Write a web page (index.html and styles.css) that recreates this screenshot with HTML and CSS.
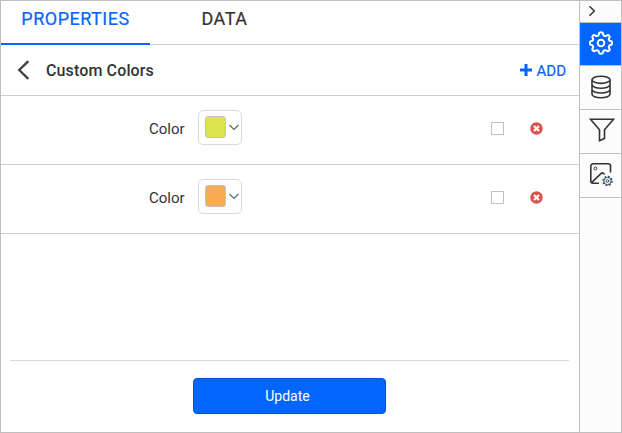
FILE: index.html
```html
<!DOCTYPE html>
<html lang="en">
<head>
<meta charset="utf-8">
<title>Properties</title>
<link rel="stylesheet" href="styles.css">
</head>
<body>
<div class="window">
  <main class="panel">
    <nav class="tabs">
      <div class="tab active"><span>PROPERTIES</span></div>
      <div class="tab"><span>DATA</span></div>
    </nav>
    <header class="header">
      <svg class="back" width="14" height="20" viewBox="0 0 14 20"><path d="M12.300 1.200 3.300 10l9 8.800"/></svg>
      <h1 class="title">Custom Colors</h1>
      <div class="add">
        <svg width="12" height="12" viewBox="0 0 12 12"><path d="M6 0v12M0 6h12"/></svg>
        <span>ADD</span>
      </div>
    </header>
    <section class="row">
      <span class="label">Color</span>
      <div class="picker">
        <i class="swatch lime"></i>
        <svg class="caret" width="12" height="7" viewBox="0 0 12 7"><path d="m1.500 1 4.500 4.500L10.500 1"/></svg>
      </div>
      <i class="check"></i>
      <svg class="remove" width="13" height="13" viewBox="0 0 13 13"><circle cx="6.500" cy="6.500" r="6.200"/><path d="m4 4 5 5m0-5L4 9"/></svg>
    </section>
    <section class="row">
      <span class="label">Color</span>
      <div class="picker">
        <i class="swatch orange"></i>
        <svg class="caret blue" width="12" height="7" viewBox="0 0 12 7"><path d="m1.500 1 4.500 4.500L10.500 1"/></svg>
      </div>
      <i class="check"></i>
      <svg class="remove" width="13" height="13" viewBox="0 0 13 13"><circle cx="6.500" cy="6.500" r="6.200"/><path d="m4 4 5 5m0-5L4 9"/></svg>
    </section>
    <footer class="footer"><button class="update">Update</button></footer>
  </main>
  <aside class="rail">
    <div class="collapse"><svg width="8" height="12" viewBox="0 0 8 12"><path d="m1.500 1.200 4.800 4.800-4.800 4.800"/></svg></div>
    <div class="tool selected">
      <svg width="24" height="24" viewBox="0 0 24 24"><path d="M10 3q0-1.800 2-1.800T14 3q.3 1.600 1.500 2t2.400-.6q1.200-.8 2.200.2t.2 2.200q-.8 1.200-.3 2.200t1.500 1q1.700.2 1.700 2t-1.700 2q-1 .2-1.500 1.200t.3 2.200q.8 1.200-.2 2.200t-2.200.2q-1.200-.9-2.400-.5t-1.500 2q-.2 1.500-2 1.500t-2-1.500q-.3-1.600-1.500-2t-2.400.5q-1.200.8-2.200-.2t-.2-2.200q.8-1.200.3-2.200T2.500 14Q.8 13.800.8 12t1.700-2Q3.600 9.900 4 9t-.3-2.200q-.8-1.200.2-2.200t2.200-.2Q7.300 5.400 8.500 5T10 3z"/><circle cx="12" cy="12" r="3.300"/></svg>
    </div>
    <div class="tool">
      <svg width="22" height="24" viewBox="0 0 22 24"><ellipse cx="11" cy="4.800" rx="9" ry="3.600"/><path d="M2 4.800v14.400c0 2 4 3.600 9 3.600s9-1.600 9-3.600V4.800M2 9.600c0 2 4 3.600 9 3.600s9-1.600 9-3.600M2 14.400c0 2 4 3.600 9 3.600s9-1.600 9-3.600"/></svg>
    </div>
    <div class="tool funnel">
      <svg width="26" height="24" viewBox="0 0 26 24"><path d="M1.500 1.200h23l-9 10.500v8.800l-5 2.200v-11z"/></svg>
    </div>
    <div class="tool image">
      <svg width="24" height="24" viewBox="0 0 24 24"><path d="M10 21.300H4a2.200 2.200 0 0 1-2.200-2.200V4A2.200 2.200 0 0 1 4 1.800h15.300A2.200 2.200 0 0 1 21.500 4v6.500M2.600 20.600l9.600-9.200q1.100-1 2.200-.1l1.200 1"/><circle class="fine" cx="6.500" cy="6.500" r="1.400"/><circle class="cog" cx="18.500" cy="19" r="4.500"/><circle class="fine navy" cx="18.500" cy="19" r="3.700"/><circle class="fine navy" cx="18.500" cy="19" r="1.400"/></svg>
    </div>
  </aside>
</div>
</body>
</html>
```
FILE: styles.css
```css
* { box-sizing: border-box; }
body {
  margin: 0;
  font-family: Roboto, "Liberation Sans", sans-serif;
  color: #333;
}
svg { display: block; fill: none; flex: none; }
.window {
  display: flex;
  width: 622px;
  height: 433px;
  border: 1px solid #bfbfbf;
  background: #fff;
}
.panel { display: flex; flex-direction: column; width: 578px; }
.tabs {
  display: flex;
  height: 44px;
  border-bottom: 1px solid #cfcfcf;
}
.tab {
  width: 149px;
  height: 44px;
  padding-top: 7px;
  text-align: center;
  font-size: 18px;
  line-height: 21px;
  letter-spacing: .5px;
  -webkit-text-stroke: .2px currentColor;
}
.active { color: #0565ff; border-bottom: 2px solid #0565ff; }
.header {
  display: flex;
  align-items: center;
  height: 51px;
  padding: 0 13px 0 15px;
  border-bottom: 1px solid #cfcfcf;
}
.back { stroke: #444; stroke-width: 2.400; }
.title { margin: 1px 0 0 16px; font-size: 16px; font-weight: 500; letter-spacing: .13px; }
.add {
  display: flex;
  align-items: center;
  gap: 5px;
  margin-left: auto;
  color: #0565ff;
  font-size: 15px;
  -webkit-text-stroke: .2px currentColor;
}
.add span { padding-top: 1px; }
.add svg { stroke: #0565ff; stroke-width: 3; }
.row {
  display: flex;
  align-items: center;
  height: 69px;
  padding: 0 36px 5px 148px;
  border-bottom: 1px solid #cfcfcf;
}
.label { width: 49px; padding-top: 2px; font-size: 15px; }
.picker {
  display: flex;
  align-items: center;
  width: 44px;
  height: 35px;
  padding: 0 0 1px 6px;
  border: 1px solid #d9d9d9;
  border-radius: 5px;
}
.swatch {
  width: 21px;
  height: 22px;
  border: 1px solid #c4c4c4;
  border-radius: 3px;
}
.lime { background: #dde34d; }
.orange { background: #f9ab53; }
.caret { margin-left: 2px; stroke: #665a55; stroke-width: 1.100; }
.blue { stroke: #4a6580; }
.check { width: 13px; height: 13px; margin: 2px 26px 0 auto; border: 1px solid #c1c1c1; }
.remove { margin-top: 1px; fill: #d9534f; }
.remove path { stroke: #fff; stroke-width: 2.200; }
.footer {
  display: flex;
  justify-content: center;
  height: 72px;
  margin: auto 10px 0 9px;
  padding-top: 17px;
  border-top: 1px solid #d9d9d9;
}
.update {
  width: 193px;
  height: 36px;
  padding: 0 4px 1px 0;
  border: 1px solid #0653cf;
  border-radius: 4px;
  background: #0565ff;
  color: #fff;
  font: 14px Roboto, "Liberation Sans", sans-serif;
}
.rail { width: 42px; border-left: 1px solid #bfbfbf; background: #fcfcfc; }
.collapse { height: 22px; padding: 4px 0 0 8px; border-bottom: 1px solid #bfbfbf; }
.collapse svg { stroke: #333; stroke-width: 1.500; }
.tool {
  display: flex;
  align-items: center;
  justify-content: center;
  height: 44px;
  padding-bottom: 2px;
  border-bottom: 1px solid #bfbfbf;
}
.tool svg { stroke: #333; stroke-width: 1.600; }
.selected { height: 43px; background: #0565ff; border-color: #0565ff; }
.selected + .tool { height: 45px; border-top: 1px solid #bfbfbf; margin-top: -1px; }
.selected svg { stroke: #fff; stroke-width: 2; stroke-linejoin: round; }
.funnel { padding: 0 0 4px 2px; }
.image { padding-bottom: 4px; }
.tool .fine { stroke-width: 1; }
.tool .navy { stroke: #34495e; }
.tool .cog { stroke: #34495e; stroke-width: 1.500; stroke-dasharray: 1.700 1.834; }
```
